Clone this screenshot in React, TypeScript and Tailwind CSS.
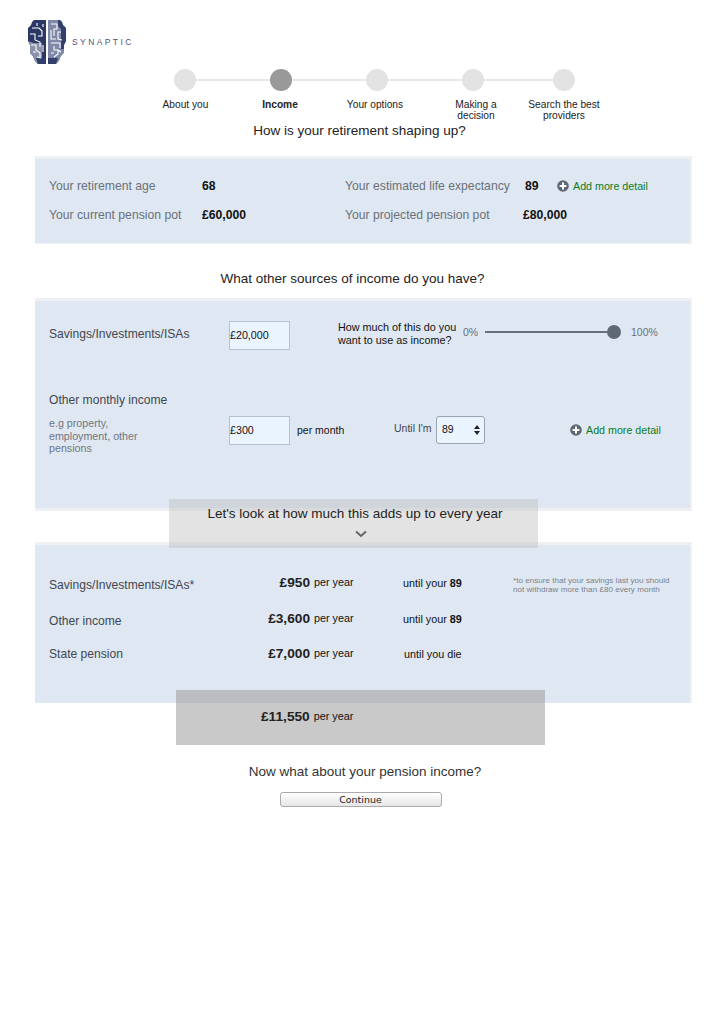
// Synaptic income step wireframe
const steps = [
  { label: "About you", width: "w-[97px]" },
  { label: "Income", width: "w-[92px]", active: true },
  { label: "Your options", width: "w-[98px]" },
  { label: "Making a decision", width: "w-[102px] pl-[26px] pr-[24px]" },
  { label: "Search the best providers", width: "w-[76px]" },
];

function PlusIcon() {
  return (
    <svg width="12" height="12" viewBox="0 0 12 12" className="shrink-0">
      <circle cx="6" cy="6" r="5.8" fill="#5d6873" />
      <path d="M6 2.6v6.8M2.6 6h6.8" stroke="#fff" strokeWidth="2" />
    </svg>
  );
}

function Logo() {
  return (
    <svg width="38" height="46" viewBox="0 0 38 46" className="shrink-0">
      <path d="M6 1h12v44h-8l-3-3-2-5-3-3v-8L0 22V9l3-3 1-3z" fill="#2b3866" />
      <path d="M0 22l2 4v8l3 3 2 5 3 3h4V24H6z" fill="#8a92ac" />
      <path d="M20 1h12l2 2 1 3 3 3v13l-2 4v8l-3 3-2 5-3 3h-8z" fill="#7f88a6" />
      <path d="M30 1h2l2 2 1 3 3 3v13l-2 4v4h-3V10l-3-3zM8 39h10v6h-8zM20 39h10l-2 6h-8z" fill="#33406d" />
      <g fill="none" stroke="#fff" strokeWidth="1.1">
        <path d="M4 9h7l3 3v5h-4M2 15h5v6l5 2v5M9 4v3M15 5v3M3 26h5v5l4 3v4M15 26v7M5 33h3M9 38l4 1" />
        <path d="M23 5h6v5h-3v7M23 11v9h5M33 13h-3v7l4 1M23 24h9v5M26 27v4h4v4l-4 3M33 33l-3-2M23 34h3" />
      </g>
    </svg>
  );
}

function AddDetail() {
  return (
    <span className="flex items-center gap-[4px] text-[10.7px] text-[#0b7a1e]">
      <PlusIcon />
      Add more detail
    </span>
  );
}

function IncomeRow({ label, amount, until, age, note, raised, className }: { label: string; amount: string; until: string; age?: string; note?: boolean; raised?: boolean; className: string }) {
  return (
    <div className={`flex items-center ${className}`}>
      <span className="w-[180px] pl-[14px] text-[12.1px] text-[#3f4650]">{label}</span>
      <span className={`w-[95px] text-right text-[13.7px] font-bold text-[#222] ${raised ? "-mt-[3px]" : ""}`}>{amount}</span>
      <span className={`ml-[4px] w-[89px] text-[10.8px] text-[#111] ${raised ? "-mt-[5px]" : "-mt-[2px]"}`}>per year</span>
      <span className={`w-[110px] text-[10.8px] text-[#111] ${raised ? "-mt-[4px]" : "pl-[1px]"}`}>
        {until} {age && <b>{age}</b>}
      </span>
      {note && (
        <span className="w-[165px] text-[8.1px] leading-[9px] text-[#7b828b]">
          *to ensure that your savings last you should not withdraw more than £80 every month
        </span>
      )}
    </div>
  );
}

export default function App() {
  return (
    <div className="min-h-[1028px] w-[727px] bg-white font-['Liberation_Sans',Arial,sans-serif] text-[#222]">
      <div className="flex items-center gap-[6px] pl-[28px] pt-[19px]">
        <Logo />
        <span className="text-[8.5px] tracking-[2.4px] text-[#4c5677]">SYNAPTIC</span>
      </div>

      <div className="ml-[174px] mt-[4px] flex items-center">
        <div className="h-[22px] w-[22px] rounded-full bg-[#e3e3e3]" />
        <div className="h-[2px] w-[74px] bg-[#e8e8e8]" />
        <div className="h-[22px] w-[22px] rounded-full bg-[#999]" />
        <div className="h-[2px] w-[74px] bg-[#e8e8e8]" />
        <div className="h-[22px] w-[22px] rounded-full bg-[#e3e3e3]" />
        <div className="h-[2px] w-[74px] bg-[#e8e8e8]" />
        <div className="h-[22px] w-[22px] rounded-full bg-[#e3e3e3]" />
        <div className="h-[2px] w-[69px] bg-[#e8e8e8]" />
        <div className="h-[22px] w-[22px] rounded-full bg-[#e3e3e3]" />
      </div>

      <div className="ml-[137px] mt-[8px] flex h-[22px] items-start">
        {steps.map((s) => (
          <span key={s.label} className={`${s.width} text-center text-[10.2px] leading-[11px] ${s.active ? "font-bold" : ""}`}>
            {s.label}
          </span>
        ))}
      </div>

      <h2 className="mt-[1px] h-[24px] pr-[8px] text-center text-[13.5px] leading-[18px] font-normal">How is your retirement shaping up?</h2>

      <section className="ml-[35px] mt-[10px] h-[88px] w-[657px] border-t-[3px] border-r-[2px] border-b-[1px] border-[#eef0f3] bg-[#dfe8f2] pl-[14px] pt-[13px] text-[12.2px] text-[#6a7079]">
        <div className="flex h-[29px] items-center">
          <span className="w-[153px]">Your retirement age</span>
          <b className="w-[143px] text-[#111]">68</b>
          <span className="w-[180px]">Your estimated life expectancy</span>
          <b className="w-[32px] text-[#111]">89</b>
          <AddDetail />
        </div>
        <div className="flex h-[29px] items-center">
          <span className="w-[153px]">Your current pension pot</span>
          <b className="w-[143px] text-[#111]">£60,000</b>
          <span className="w-[178px]">Your projected pension pot</span>
          <b className="text-[#111]">£80,000</b>
        </div>
      </section>

      <h2 className="mt-[24px] h-[30px] pr-[22px] text-center text-[13.5px] leading-[22px] font-normal">What other sources of income do you have?</h2>

      <section className="ml-[35px] h-[213px] w-[657px] border-t-[3px] border-r-[2px] border-b-[3px] border-[#eef0f3] bg-[#dfe8f2] pt-[20px]">
        <div className="flex h-[29px] items-center pl-[14px]">
          <span className="-mt-[2px] w-[180px] text-[12.1px] text-[#3f4650]">Savings/Investments/ISAs</span>
          <input readOnly value="£20,000" className="h-[29px] w-[61px] border border-[#b5c1cd] bg-[#eaf4fe] pb-[2px] text-[10.7px] text-[#111]" />
          <span className="-mt-[4px] ml-[48px] w-[125px] text-[10.8px] leading-[13px] text-[#111]">How much of this do you want to use as income?</span>
          <span className="-mt-[6px] w-[22px] text-[10.5px] text-[#6a7079]">0%</span>
          <div className="-mt-[8px] flex items-center">
            <div className="h-[2px] w-[122px] bg-[#66707c]" />
            <div className="h-[14px] w-[14px] rounded-full bg-[#5e6975]" />
          </div>
          <span className="-mt-[6px] ml-[10px] text-[10.5px] text-[#6a7079]">100%</span>
        </div>

        <div className="ml-[14px] mt-[42px] text-[12.1px] leading-[16px] text-[#3f4650]">Other monthly income</div>
        <div className="mt-[8px] flex items-start pl-[14px]">
          <span className="mt-[1px] w-[180px] pr-[70px] text-[10.7px] leading-[12.5px] text-[#6f7680]">e.g property, employment, other pensions</span>
          <input readOnly value="£300" className="h-[29px] w-[61px] border border-[#b5c1cd] bg-[#eaf4fe] pb-[2px] text-[10.7px] text-[#111]" />
          <span className="ml-[7px] mt-[7px] w-[97px] text-[10.5px] text-[#111]">per month</span>
          <span className="mt-[5px] w-[42px] text-[10.5px] text-[#3f4650]">Until I'm</span>
          <div className="flex h-[28px] w-[49px] items-center justify-between rounded-[3px] border border-[#9aa5b2] bg-[#eaf4fe] pl-[5px] pr-[4px] text-[10.5px] text-[#111]">
            89
            <svg width="6" height="10" viewBox="0 0 6 10">
              <path d="M3 0l3 4H0zM3 10l3-4H0z" fill="#222" />
            </svg>
          </div>
          <div className="ml-[85px] mt-[6px]">
            <AddDetail />
          </div>
        </div>
      </section>

      <div className="relative z-10 -mt-[12px] ml-[169px] flex h-[49px] w-[369px] flex-col items-center bg-[rgba(185,185,185,0.4)] pt-[7px]">
        <span className="ml-[3px] text-[13.5px] leading-[16px]">Let's look at how much this adds up to every year</span>
        <svg width="12" height="8" viewBox="0 0 12 8" className="mt-[8px] translate-x-[7px]">
          <path d="M1 1.5l5 4.5 5-4.5" fill="none" stroke="#666" strokeWidth="2" />
        </svg>
      </div>

      <section className="-mt-[6px] ml-[35px] h-[161px] w-[657px] border-t-[3px] border-r-[2px] border-[#eef0f3] bg-[#dfe8f2] pt-[22px]">
        <IncomeRow label="Savings/Investments/ISAs*" amount="£950" until="until your" age="89" note raised className="h-[36px]" />
        <IncomeRow label="Other income" amount="£3,600" until="until your" age="89" raised className="h-[36px]" />
        <IncomeRow label="State pension" amount="£7,000" until="until you die" className="h-[30px]" />
      </section>

      <div className="relative z-10 -mt-[13px] ml-[176px] flex h-[55px] w-[369px] items-start bg-[rgba(153,153,153,0.53)] pl-[85px] pt-[19px]">
        <b className="text-[13.7px] leading-[16px] text-[#222]">£11,550</b>
        <span className="ml-[4px] text-[10.8px] leading-[14px] text-[#111]">per year</span>
      </div>

      <p className="mt-[17px] pl-[3px] text-center text-[13.5px] leading-[20px] text-[#333]">Now what about your pension income?</p>

      <div className="mt-[10px] flex justify-center pr-[6px]">
        <button className="h-[15px] w-[162px] rounded-[3px] border border-[#aaa] bg-gradient-to-b from-white to-[#e6e6e6] font-['DejaVu_Sans',sans-serif] text-[9.5px] leading-[12px] text-[#222]">
          Continue
        </button>
      </div>
    </div>
  );
}
